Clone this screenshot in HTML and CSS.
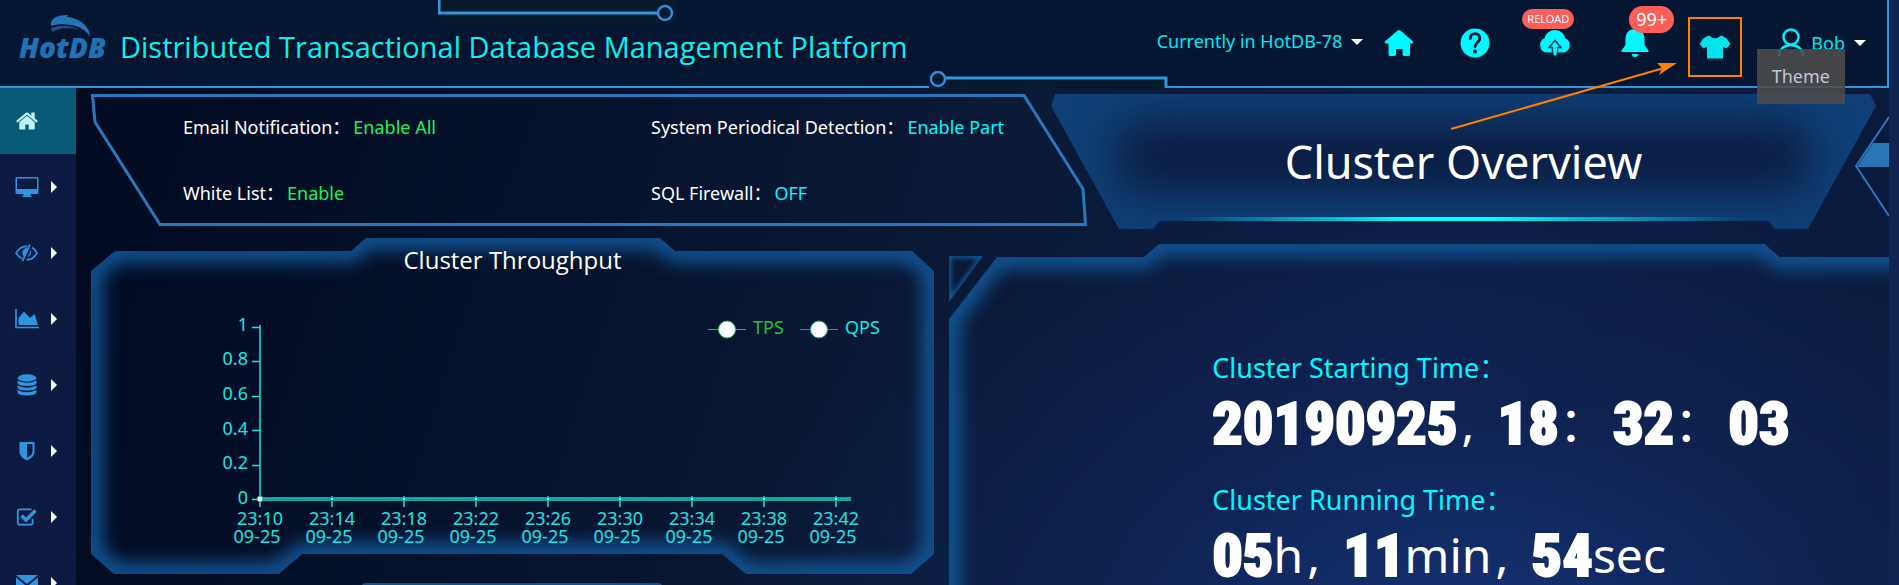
FILE: index.html
```html
<!DOCTYPE html>
<html lang="en">
<head>
<meta charset="utf-8">
<title>HotDB - Distributed Transactional Database Management Platform</title>
<link rel="stylesheet" href="styles.css">
</head>
<body>
<div class="app">
  <header class="header">
    <svg class="deco deco-top" width="239" height="23" viewBox="438 0 239 23" aria-hidden="true">
      <rect x="438" y="0" width="239" height="23" fill="#061a2b"/>
      <path d="M439 0V13H657" fill="none" stroke="#2f97e0" stroke-width="3"/>
      <circle cx="665" cy="13" r="7" fill="#061a2b" stroke="#2f8fdc" stroke-width="2.5"/>
    </svg>
    <svg class="deco deco-bottom" width="240" height="19" viewBox="928 69 240 19" aria-hidden="true">
      <rect x="929" y="69" width="237" height="19" fill="#051632"/>
      <rect x="930" y="78" width="236" height="10" fill="#061a2b"/>
      <path d="M945 78H1166V88" fill="none" stroke="#2f97e0" stroke-width="3"/>
      <circle cx="938" cy="79" r="7" fill="#061a2b" stroke="#2f8fdc" stroke-width="2.5"/>
    </svg>
    <a class="brand" href="#">
      <svg class="swoosh" width="44" height="24" viewBox="48 17 44 24" aria-hidden="true">
        <path d="M51 29C50 22 55 18 68 18L67 20C80 21 90 30 90 40C87 34 80 29 71 28C63 27 57 27 51 29Z" fill="#2673b5"/>
        <path d="M51 31C60 28 72 28 80 33C72 30 60 30 52 35Z" fill="#1b5688"/>
      </svg>
      <span class="logo">HotDB</span>
    </a>
    <h1 class="title">Distributed Transactional Database Management Platform</h1>
    <nav class="tools" aria-label="Tools">
      <button class="link" type="button">Currently in HotDB-78<i class="caret"></i></button>
      <button class="tool tool-home" type="button" aria-label="Home">
        <svg width="30" height="28" viewBox="0 0 30 28"><path d="M13.6 1.500Q15 .3 16.400 1.500L29 12.400Q30 14 28.300 14.400H26V25.500Q26 27 24.500 27H20Q18.600 27 18.600 25.500V20H12V25.500Q12 27 10.600 27H6Q4.600 27 4.600 25.500V14.400H1.700Q0 14 1 12.400Z" fill="#00f8ff"/></svg>
      </button>
      <button class="tool" type="button" aria-label="Help">
        <svg width="30" height="30" viewBox="0 0 30 30"><circle cx="15" cy="15" r="14.500" fill="#00f8ff"/><path d="M10.200 10.800C10.200 3.800 19.800 3.900 19.800 10.400C19.800 14 15.200 14.400 15.200 18.500" fill="none" stroke="#051632" stroke-width="2.800" stroke-linecap="round"/><circle cx="15" cy="23.500" r="2" fill="#051632"/></svg>
      </button>
      <button class="tool" type="button" aria-label="Reload">
        <svg width="32" height="26" viewBox="0 0 32 26"><path d="M7.500 22.500A7.500 7.500 0 0 1 5.500 8.300A10.500 9.500 0 0 1 26.300 8.300A7.500 7.500 0 0 1 24.800 22.500Z" fill="#00f8ff"/><path d="M13.500 22.500V17.500H10L16 10.500L22 17.500H18.500V22.500" fill="none" stroke="#073a5c" stroke-width="1.500"/><path d="M16 25.500V13" stroke="#00f8ff" stroke-width="3"/></svg>
        <span class="badge badge-small">RELOAD</span>
      </button>
      <button class="tool" type="button" aria-label="Notifications">
        <svg width="28" height="30" viewBox="0 0 28 30"><path d="M14 1C20 1 23.500 5 23.500 11V17L27.500 22.500V24H.5V22.500L4.500 17V11C4.500 5 8 1 14 1Z" fill="#00f8ff"/><path d="M10.500 26H17.500Q17 29 14 29T10.500 26Z" fill="#00f8ff"/></svg>
        <span class="badge badge-large">99+</span>
      </button>
      <span class="tool">
        <button class="theme" type="button" aria-label="Theme">
          <svg width="32" height="24" viewBox="0 0 32 24"><path d="M10 .5Q16 6 22 .5Q26 1.500 28 4L31.500 9L27.500 13.500L24 11.500V23.500H8V11.500L4.500 13.500L.5 9L4 4Q6 1.500 10 .5Z" fill="#00e4ee"/></svg>
        </button>
      </span>
      <button class="user" type="button">
        <svg width="28" height="30" viewBox="0 0 28 30"><circle cx="14" cy="9" r="7.500" fill="none" stroke="#00f0f8" stroke-width="2.500"/><path d="M2 28.500C2 13 26 13 26 28.500" fill="none" stroke="#00f0f8" stroke-width="2.500"/></svg>
        <span>Bob</span><i class="caret"></i>
      </button>
    </nav>
    <div class="tooltip" role="tooltip">Theme</div>
    <svg class="pointer" width="230" height="70" viewBox="1449 61 230 70" aria-hidden="true">
      <path d="M1451 129L1664 68" stroke="#ff8000" stroke-width="2"/>
      <path d="M1677 63L1657 63L1662 68L1659 75Z" fill="#ff8000"/>
    </svg>
  </header>

  <div class="body">
    <nav class="sidebar" aria-label="Main menu">
      <a class="item active" href="#" aria-label="Home"><svg class="icon" viewBox="0 0 1792 1792"><path d="M1472 992v480q0 26-19 45t-45 19h-384v-384h-256v384h-384q-26 0-45-19t-19-45v-480q0-1 .5-3t.5-3l575-474 575 474q1 2 1 6zm223-69l-62 74q-8 9-21 11h-3q-13 0-21-7l-692-577-692 577q-12 8-24 7-13-2-21-11l-62-74q-8-10-7-23.500t11-21.500l719-599q32-26 76-26t76 26l244 204v-195q0-14 9-23t23-9h192q14 0 23 9t9 23v408l219 182q10 8 11 21.500t-7 23.500z"/></svg></a>
      <a class="item" href="#" aria-label="Monitoring"><svg class="icon" viewBox="0 0 24 24"><path d="M2 2H22Q23.500 2 23.500 3.500V17.500Q23.500 19 22 19H15.500V20.500H16.500V22H7.500V20.500H8.500V19H2Q.5 19 .5 17.500V3.500Q.5 2 2 2ZM2 3.500V14H22V3.500Z" fill-rule="evenodd"/></svg><i class="arrow"></i></a>
      <a class="item" href="#" aria-label="Inspection"><svg class="icon" viewBox="0 0 24 24"><path d="M12.500 5.500Q5.500 4.500 1.200 12Q3 15.500 7 17.500M17 6.500Q20 8 22 12Q18 19 11.500 18.700" fill="none" stroke="#3095dc" stroke-width="1.700"/><path d="M15 3.500L7.500 20" stroke="#3095dc" stroke-width="1.800"/><path d="M12.500 6.500Q7 8 7.500 12Q7.500 15 9.500 16Z"/><path d="M16 9L12.500 16.500Q17 14 16 9Z"/></svg><i class="arrow"></i></a>
      <a class="item" href="#" aria-label="Statistics"><svg class="icon" viewBox="0 0 24 24"><path d="M1 2V20.500H24.500" fill="none" stroke="#3095dc" stroke-width="1.700"/><path d="M3.500 18V11L9 4.500L15 11L19.500 7L23 18Z"/></svg><i class="arrow"></i></a>
      <a class="item" href="#" aria-label="Databases"><svg class="icon" viewBox="0 0 24 24"><ellipse cx="12" cy="5" rx="9.500" ry="3.700"/><path d="M2.500 7.500Q12 12 21.500 7.500V10Q21 13 12 13T2.500 10ZM2.500 12.500Q12 17 21.500 12.500V14.500Q21 17.500 12 17.500T2.500 14.500ZM2.500 17Q12 21.500 21.500 17V19.500Q21 22.500 12 22.500T2.500 19.500Z"/></svg><i class="arrow"></i></a>
      <a class="item" href="#" aria-label="Security"><svg class="icon" viewBox="0 0 24 24"><path d="M4.500 3H19.500V13Q19.500 18 12 21.500Q4.500 18 4.500 13ZM12 5V18.500Q17.500 16 17.500 13V5Z" fill-rule="evenodd"/></svg><i class="arrow"></i></a>
      <a class="item" href="#" aria-label="Tasks"><svg class="icon" viewBox="0 0 24 24"><path d="M16.500 4.300H5Q2.800 4.300 2.800 6.500V17.500Q2.800 19.700 5 19.700H15.500Q17.700 19.700 17.700 17.500V14" fill="none" stroke="#3095dc" stroke-width="1.800"/><path d="M6.500 10.500L11 15L20.500 5.500" fill="none" stroke="#3095dc" stroke-width="3.500"/></svg><i class="arrow"></i></a>
      <a class="item" href="#" aria-label="Messages"><svg class="icon" viewBox="0 0 24 24"><path d="M1 4H23L12 13ZM1 6.500L12 15.500L23 6.500V20H1Z"/></svg><i class="arrow"></i></a>
    </nav>

    <main class="main">
      <div class="row row-top">
        <section class="status">
          <svg class="frame" viewBox="91 94 996 135" preserveAspectRatio="none" aria-hidden="true">
            <path d="M92.500 95.500H1024L1083 189L1085.500 224.500H160L95 122Z" fill="none" stroke="#2b77bc" stroke-width="3"/>
          </svg>
          <dl class="facts">
            <div><dt>Email Notification：</dt><dd class="ok">Enable All</dd></div>
            <div><dt>System Periodical Detection：</dt><dd>Enable Part</dd></div>
            <div><dt>White List：</dt><dd class="ok">Enable</dd></div>
            <div><dt>SQL Firewall：</dt><dd>OFF</dd></div>
          </dl>
        </section>
        <section class="banner">
          <svg class="frame" viewBox="1051 94 825 135" preserveAspectRatio="none" aria-hidden="true">
            <defs>
              <filter id="soft" x="-20%" y="-100%" width="140%" height="300%" color-interpolation-filters="sRGB"><feGaussianBlur stdDeviation="22"/></filter>
              <linearGradient id="line"><stop offset="0" stop-color="#00ffff" stop-opacity="0"/><stop offset=".4" stop-color="#00ffff"/><stop offset=".55" stop-color="#00ffff"/><stop offset="1" stop-color="#00ffff" stop-opacity="0"/></linearGradient>
              <clipPath id="banner-clip"><path d="M1055 94H1870L1876 106L1808 229H1775L1768 221H1160L1153 229H1119L1051 106Z"/></clipPath>
            </defs>
            <g clip-path="url(#banner-clip)">
              <rect x="1051" y="94" width="825" height="135" fill="#0f3f76"/>
              <rect x="1116" y="122" width="694" height="70" rx="24" fill="#0b1d43" filter="url(#soft)"/>
            </g>
            <rect x="1180" y="217" width="565" height="4" fill="url(#line)"/>
          </svg>
          <h2 class="banner-title">Cluster Overview</h2>
        </section>
        <svg class="edge" width="34" height="104" viewBox="1855 114 34 104" aria-hidden="true">
          <path d="M1873 143H1889V167H1857Z" fill="#2c75b5"/>
          <path d="M1889 117L1856 166L1889 216" fill="none" stroke="#2b77bc" stroke-width="2"/>
        </svg>
      </div>

      <div class="row row-bottom">
        <div class="left">
          <section class="panel">
            <svg class="frame" viewBox="91 238 843 336" preserveAspectRatio="none" aria-hidden="true">
              <defs>
                <filter id="glow" x="-10%" y="-10%" width="120%" height="120%" color-interpolation-filters="sRGB"><feGaussianBlur stdDeviation="9"/></filter>
                <path id="throughput" d="M91 271L115 251H351L366 238H660L675 251H912L934 271V554L911 574H746L722 554H302L279 574H114L91 554Z"/>
                <clipPath id="throughput-clip"><use href="#throughput"/></clipPath>
              </defs>
              <g clip-path="url(#throughput-clip)"><use href="#throughput" fill="none" stroke="#125799" stroke-width="22" filter="url(#glow)"/></g>
            </svg>
            <h2 class="panel-title">Cluster Throughput</h2>
            <svg class="chart" viewBox="91 292 843 262" role="img" aria-label="TPS and QPS over time">
              <g stroke="#1dc43c" stroke-width="1"><path d="M708 329.500H746"/><circle cx="727" cy="329.500" r="8.500" fill="#fff"/></g>
              <text x="753" y="334" fill="#1dc43c">TPS</text>
              <g stroke="#0ba2ab" stroke-width="1"><path d="M800 329.500H838"/><circle cx="819" cy="329.500" r="8.500" fill="#fff"/></g>
              <text x="845" y="334" fill="#1ae6e6">QPS</text>
              <path d="M260 325V507M252 327.500H260M252 361.500H260M252 396.500H260M252 430.500H260M252 465.500H260M252 499.500H260M332 496V507M404 496V507M476 496V507M548 496V507M620 496V507M692 496V507M764 496V507M836 496V507" fill="none" stroke="#1ae6e6" stroke-width="1.500"/>
              <path d="M260 499H851" stroke="#0fa79f" stroke-width="4"/>
              <circle cx="260" cy="499" r="3" fill="#fff" stroke="#0fa79f"/>
              <g fill="#dff"><circle cx="332" cy="499" r="1"/><circle cx="404" cy="499" r="1"/><circle cx="476" cy="499" r="1"/><circle cx="548" cy="499" r="1"/><circle cx="620" cy="499" r="1"/><circle cx="692" cy="499" r="1"/><circle cx="764" cy="499" r="1"/><circle cx="836" cy="499" r="1"/></g>
              <g class="axis-y"><text x="248" y="331">1</text><text x="248" y="365">0.8</text><text x="248" y="400">0.6</text><text x="248" y="435">0.4</text><text x="248" y="469">0.2</text><text x="248" y="504">0</text></g>
              <g class="axis-x">
                <text x="260" y="525">23:10</text><text x="332" y="525">23:14</text><text x="404" y="525">23:18</text><text x="476" y="525">23:22</text><text x="548" y="525">23:26</text><text x="620" y="525">23:30</text><text x="692" y="525">23:34</text><text x="764" y="525">23:38</text><text x="836" y="525">23:42</text>
                <text x="257" y="543">09-25</text><text x="329" y="543">09-25</text><text x="401" y="543">09-25</text><text x="473" y="543">09-25</text><text x="545" y="543">09-25</text><text x="617" y="543">09-25</text><text x="689" y="543">09-25</text><text x="761" y="543">09-25</text><text x="833" y="543">09-25</text>
              </g>
            </svg>
          </section>
          <section class="panel panel-next">
            <svg class="frame" viewBox="91 583 843 336" preserveAspectRatio="none" aria-hidden="true">
              <path d="M91 616L115 596H349L364 583H660L675 596H912L934 616V919H91Z" fill="#11508c"/>
            </svg>
          </section>
        </div>
        <section class="overview">
          <svg class="frame" viewBox="949 244 940 346" preserveAspectRatio="none" aria-hidden="true">
            <defs>
              <path id="corner" d="M949 256H983L949 302Z"/>
              <path id="overview" d="M949 319L997 257H1144L1159 244H1765L1779 257H1960V700H949Z"/>
              <clipPath id="corner-clip"><use href="#corner"/></clipPath>
              <clipPath id="overview-clip"><use href="#overview"/></clipPath>
              <filter id="glow-small" x="-50%" y="-50%" width="200%" height="200%" color-interpolation-filters="sRGB"><feGaussianBlur stdDeviation="2"/></filter>
            </defs>
            <g clip-path="url(#corner-clip)"><use href="#corner" fill="none" stroke="#125799" stroke-width="5" filter="url(#glow-small)"/></g>
            <g clip-path="url(#overview-clip)"><use href="#overview" fill="none" stroke="#125799" stroke-width="22" filter="url(#glow)"/></g>
          </svg>
          <div class="times">
            <h3 class="label">Cluster Starting Time：</h3>
            <p class="value"><b>20190925</b><span class="comma">,</span><b>18</b><span class="colon">：</span><b>32</b><span class="colon">：</span><b>03</b></p>
            <h3 class="label">Cluster Running Time：</h3>
            <p class="value"><b>05</b><span>h</span><span class="comma">,</span><b>11</b><span>min</span><span class="comma">,</span><b>54</b><span>sec</span></p>
          </div>
        </section>
      </div>
    </main>
  </div>
</div>
</body>
</html>
```
FILE: styles.css
```css
* { box-sizing: border-box; }

body {
  margin: 0;
  padding-right: 10px;
  background: #112350;
  color: #fff;
  font: 18px/24px "Noto Sans", "Noto Sans CJK SC", sans-serif;
}

h1, h2, h3, p, dl, dd { margin: 0; font-weight: 400; }

button {
  border: 0;
  padding: 0;
  background: none;
  color: #00e8f0;
  font: inherit;
}

.app {
  display: flex;
  flex-direction: column;
  height: 100vh;
  overflow: hidden;
  background:
    radial-gradient(ellipse 760px 460px at 78% 108%, #153274 0%, #12296080 50%, #0d1d4200 100%),
    linear-gradient(108deg, #020a20 0%, #030d25 15%, #0a1936 50%, #0c1d45 72%, #0a1a3a 100%);
}

.header {
  position: relative;
  z-index: 2;
  display: flex;
  align-items: center;
  flex: none;
  height: 88px;
  border-right: 2px solid #2f97e0;
  border-bottom: 2px solid #2f97e0;
  background: #051632;
}

.deco { position: absolute; }
.deco-top { top: 0; left: 438px; }
.deco-bottom { top: 69px; left: 928px; }

.brand {
  position: relative;
  width: 120px;
  padding-left: 19px;
  padding-top: 8px;
  color: #2072b6;
  text-decoration: none;
}
.logo { font: italic 800 28px/32px "Open Sans", sans-serif; }
.swoosh { position: absolute; top: -9px; left: 48px; }

.title {
  position: relative;
  padding-top: 8px;
  color: #00f4fa;
  font-family: "Open Sans", sans-serif;
  font-size: 29px;
  line-height: 36px;
  text-shadow: 1px 1px 2px #000;
  white-space: nowrap;
}

.tools {
  position: relative;
  display: flex;
  align-items: center;
  height: 86px;
  margin-left: auto;
  padding-right: 21px;
}
.link { padding: 0 0 4px; white-space: nowrap; }
.caret {
  display: inline-block;
  margin-left: 9px;
  border: 6px solid transparent;
  border-top-color: #fff;
  border-bottom: 0;
  vertical-align: 3px;
}
.tool {
  position: relative;
  display: flex;
  justify-content: center;
  width: 80px;
}
.tool-home { width: 72px; }
.theme {
  display: flex;
  align-items: center;
  justify-content: center;
  width: 54px;
  height: 60px;
  margin-top: 8px;
  border: 2px solid #ff8000;
}
.badge {
  position: absolute;
  border-radius: 14px;
  background: #ff5d59;
  color: #fff;
}
.badge-small { top: -21px; left: 7px; padding: 0 5px; font-size: 11px; line-height: 20px; }
.badge-large { top: -22px; left: 34px; padding: 0 7px; font-size: 18px; line-height: 27px; }
.user { display: flex; align-items: center; padding-left: 22px; }
.user span { margin-left: 6px; }

.tooltip {
  position: absolute;
  top: 49px;
  right: 42px;
  padding: 15px;
  background: #4c4c4ce0;
  color: #c3c6d6;
  font-size: 18px;
  line-height: 25px;
}
.pointer { position: absolute; top: 61px; right: 208px; }

.body { display: flex; flex: 1; min-height: 0; }

.sidebar { flex: none; width: 76px; background: #0d1b43; }
.item { display: flex; align-items: center; height: 66px; padding-left: 15px; }
.active { background: #085a78; }
.icon { width: 24px; height: 24px; fill: #3095dc; }
.active .icon { fill: #bdf5ff; }
.arrow {
  margin-left: 12px;
  border: 6px solid transparent;
  border-left-color: #fff;
  border-right: 0;
}

.main { flex: 1; min-width: 0; padding: 6px 0 0 15px; }
.row { position: relative; display: flex; }
.row-top { padding-right: 13px; }
.row-bottom { gap: 15px; margin-top: 9px; }
.frame { position: absolute; top: 0; left: 0; width: 100%; height: 100%; }

.status { position: relative; flex: 996 1 0; height: 135px; }
.facts {
  position: relative;
  display: grid;
  grid-template-columns: 468px auto;
  row-gap: 42px;
  padding: 21px 0 0 92px;
}
.facts div { display: flex; gap: 3px; white-space: nowrap; }
dd { color: #00f8ff; }
dd.ok { color: #1cf35b; }

.banner {
  position: relative;
  display: flex;
  justify-content: center;
  flex: 825 1 0;
  height: 135px;
  margin-left: -36px;
}
.banner-title {
  position: relative;
  padding-top: 38px;
  font-size: 45px;
  line-height: 60px;
}
.edge { position: absolute; top: 20px; right: 0; }

.left { flex: 843 1 0; }
.panel { position: relative; height: 336px; }
.panel-next { margin-top: 9px; }
.panel-title {
  position: relative;
  padding-top: 6px;
  font-family: "Open Sans", sans-serif;
  font-size: 24px;
  line-height: 32px;
  text-align: center;
}
.chart { position: relative; display: block; width: 100%; margin-top: 16px; font-size: 18px; }
.axis-y { fill: #1ae6e6; text-anchor: end; }
.axis-x { fill: #1ae6e6; text-anchor: middle; }

.overview { position: relative; flex: 940 1 0; height: 346px; margin-top: 6px; }
.times { position: relative; padding: 106px 0 0 28%; }
.label { color: #00f8ff; font-size: 27px; line-height: 36px; }
.value {
  display: flex;
  height: 96px;
  font-size: 48px;
  line-height: 74px;
  white-space: nowrap;
}
.value b {
  font: 900 60px/76px "Roboto Condensed", Roboto, sans-serif;
  -webkit-text-stroke: 2px #fff;
}
.comma { width: 40px; padding-left: 4px; }
.colon { width: 54px; }
```
